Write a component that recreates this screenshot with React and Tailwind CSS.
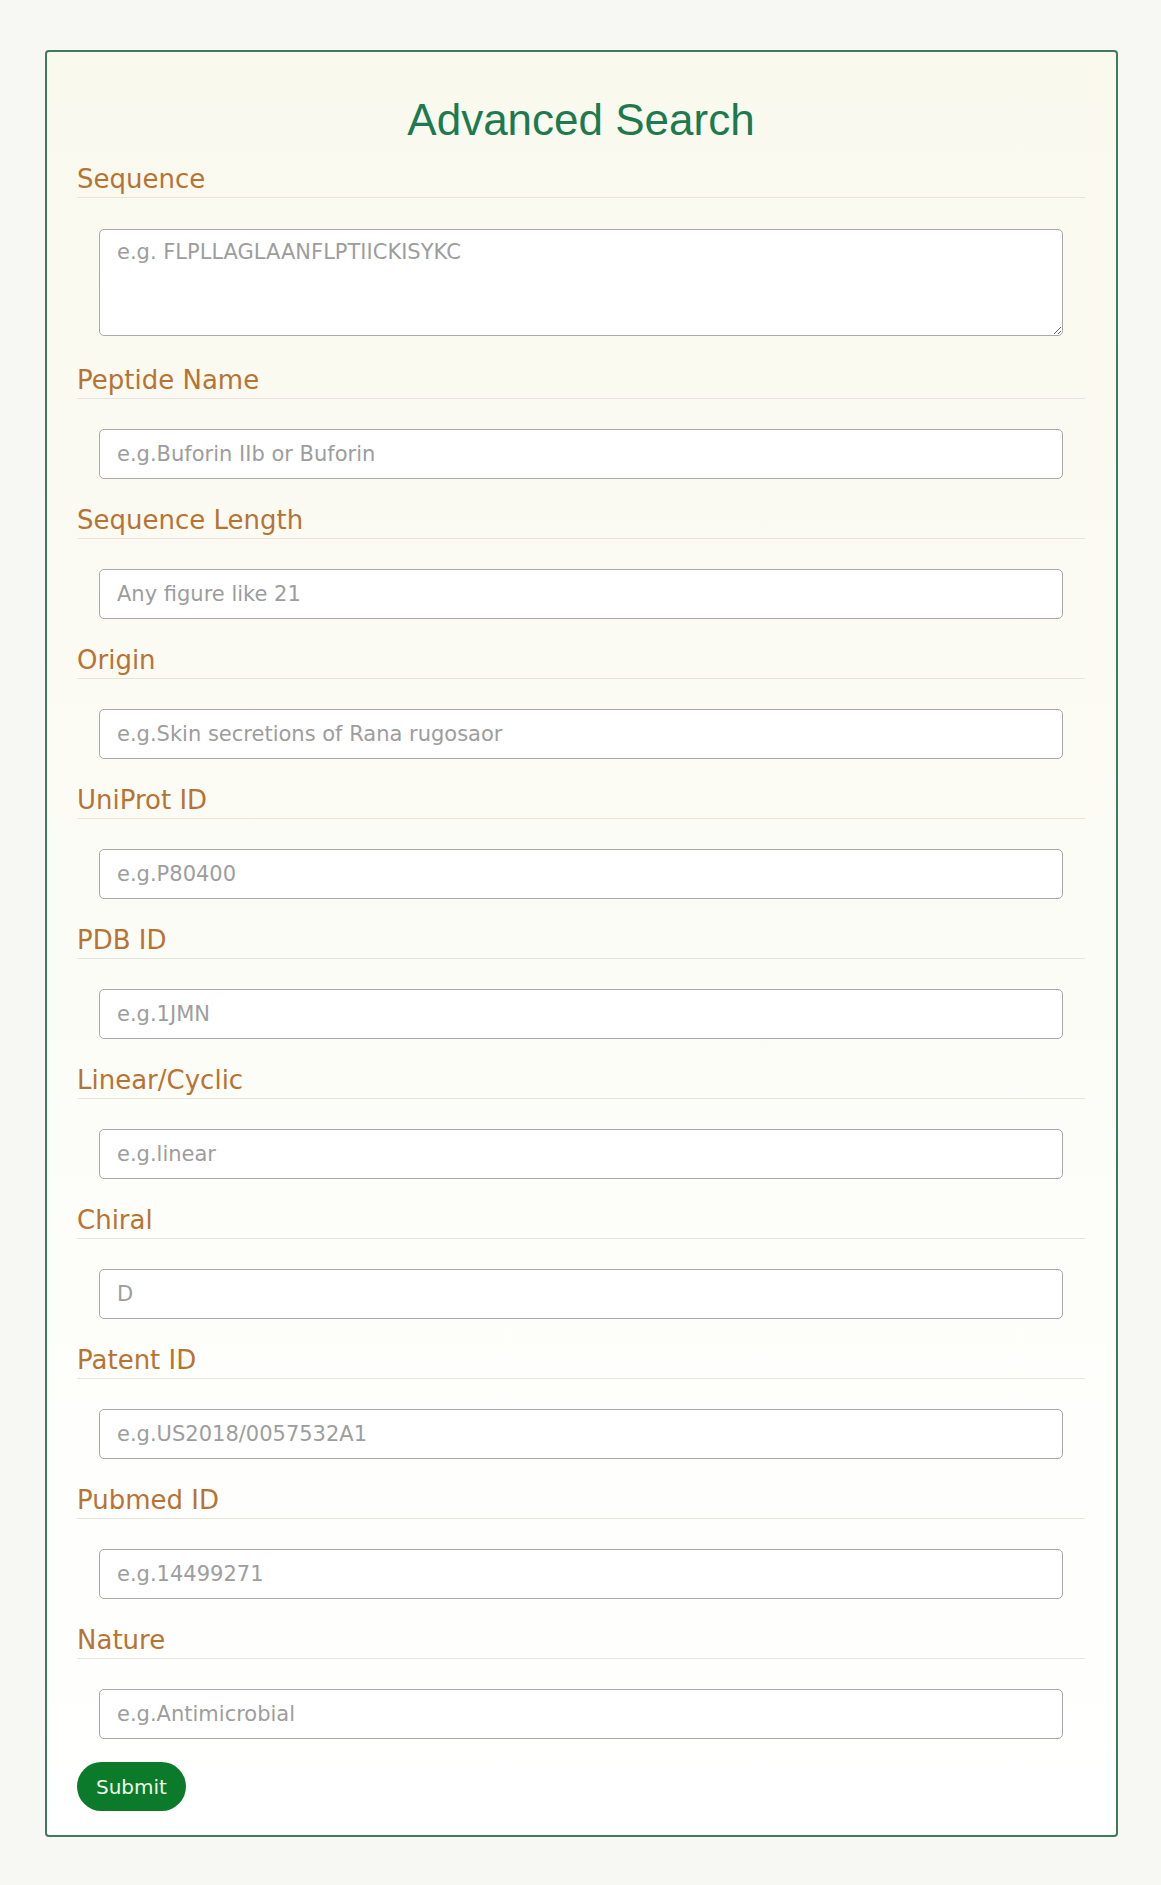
import React from 'react';

const fields = [
  { label: 'Peptide Name', placeholder: 'e.g.Buforin IIb or Buforin' },
  { label: 'Sequence Length', placeholder: 'Any figure like 21' },
  { label: 'Origin', placeholder: 'e.g.Skin secretions of Rana rugosaor' },
  { label: 'UniProt ID', placeholder: 'e.g.P80400' },
  { label: 'PDB ID', placeholder: 'e.g.1JMN' },
  { label: 'Linear/Cyclic', placeholder: 'e.g.linear' },
  { label: 'Chiral', placeholder: 'D' },
  { label: 'Patent ID', placeholder: 'e.g.US2018/0057532A1' },
  { label: 'Pubmed ID', placeholder: 'e.g.14499271' },
  { label: 'Nature', placeholder: 'e.g.Antimicrobial' },
];

const Label = ({ children }) => (
  <div className="border-b border-[#e6e4dc] pb-[3px] text-[26px] leading-[30px] text-[#b87333]">
    {children}
  </div>
);

const inputCls =
  "block w-full rounded-[5px] border border-[#a9a9a9] bg-white px-[17px] text-[21px] text-[#333] outline-none placeholder:text-[#9d9d9d] font-['DejaVu_Sans',sans-serif]";

export default function App() {
  return (
    <div className="min-h-[1885px] bg-[#f7f7f3] pt-[50px] font-['DejaVu_Sans',sans-serif]">
      <form
        onSubmit={e => e.preventDefault()}
        className="ml-[45px] w-[1073px] rounded-[4px] border-2 border-[#3f7a5e] bg-gradient-to-b from-[#f9f9ee] to-white pl-[30px] pr-[31px] pt-[43px] pb-[24px]"
      >
        <h1 className="mb-[19px] text-center text-[44px] leading-[50px] text-[#1d7a4f] font-['Liberation_Sans',Arial,sans-serif]">
          Advanced Search
        </h1>

        <Label>Sequence</Label>
        <div className="mx-[22px] mt-[31px] mb-[29px]">
          <textarea
            placeholder="e.g. FLPLLAGLAANFLPTIICKISYKC"
            className={inputCls + ' h-[107px] pt-[10px] leading-[24px]'}
          />
        </div>

        {fields.map(f => (
          <div key={f.label}>
            <Label>{f.label}</Label>
            <div className={'mx-[22px] mt-[30px] ' + (f.label === 'Nature' ? 'mb-[23px]' : 'mb-[26px]')}>
              <input type="text" placeholder={f.placeholder} className={inputCls + ' h-[50px]'} />
            </div>
          </div>
        ))}

        <button
          type="submit"
          className="h-[49px] rounded-full bg-[#0b7a2b] px-[19px] text-[20px] text-[#eefbe9]"
        >
          Submit
        </button>
      </form>
    </div>
  );
}
